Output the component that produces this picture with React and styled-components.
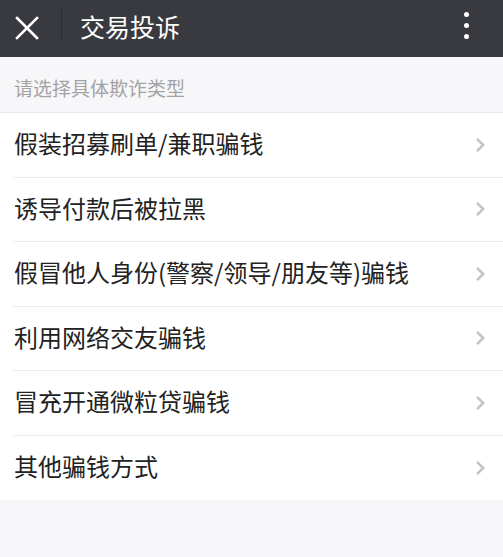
import React from "react";
import styled, { createGlobalStyle } from "styled-components";

const items = [
  "假装招募刷单/兼职骗钱",
  "诱导付款后被拉黑",
  "假冒他人身份(警察/领导/朋友等)骗钱",
  "利用网络交友骗钱",
  "冒充开通微粒贷骗钱",
  "其他骗钱方式",
];

const GlobalStyle = createGlobalStyle`
  html, body {
    margin: 0;
    padding: 0;
    background: #f7f6f9;
    font-family: "Noto Sans CJK SC", "Noto Sans", sans-serif;
  }
`;

function App() {
  return (
    <Page>
      <GlobalStyle />
      <Header>
        <CloseButton>
          <svg width="24" height="24" viewBox="0 0 24 24">
            <path
              d="M2 2 L22 22 M22 2 L2 22"
              stroke="#fff"
              strokeWidth="2.6"
              strokeLinecap="square"
            />
          </svg>
        </CloseButton>
        <Divider />
        <Title>交易投诉</Title>
        <MoreButton>
          <Dot />
          <Dot />
          <Dot />
        </MoreButton>
      </Header>
      <Hint>请选择具体欺诈类型</Hint>
      <List>
        {items.map((text) => (
          <Row key={text}>
            <RowText>{text}</RowText>
            <svg width="11" height="16" viewBox="0 0 11 16">
              <path
                d="M2 1.8 L8.2 8 L2 14.2"
                fill="none"
                stroke="#c4c4c8"
                strokeWidth="2.6"
              />
            </svg>
          </Row>
        ))}
      </List>
    </Page>
  );
}

const Page = styled.div`
  width: 503px;
  min-height: 557px;
  background: #f7f6f9;
`;

const Header = styled.div`
  height: 57px;
  background: #393a3f;
  display: flex;
  align-items: center;
  padding: 0 15px;
  box-sizing: border-box;
`;

const CloseButton = styled.div`
  width: 24px;
  height: 24px;
  display: flex;
  margin-top: -2px;
`;

const Divider = styled.div`
  width: 1px;
  height: 34px;
  background: #2c2d31;
  margin: -8px 18px 0 22px;
`;

const Title = styled.div`
  flex: 1;
  color: #fff;
  font-size: 25px;
  margin-top: -6px;
`;

const MoreButton = styled.div`
  display: flex;
  flex-direction: column;
  gap: 6px;
  margin-right: 19px;
  margin-top: -6px;
`;

const Dot = styled.span`
  width: 5px;
  height: 5px;
  border-radius: 50%;
  background: #fff;
`;

const Hint = styled.div`
  height: 55px;
  display: flex;
  align-items: center;
  padding: 6px 14px 0;
  color: #a3a3a3;
  font-size: 19px;
  box-sizing: border-box;
`;

const List = styled.div`
  background: #fff;
  border-top: 1px solid #ebebeb;
`;

const Row = styled.div`
  height: 64.5px;
  box-sizing: border-box;
  display: flex;
  align-items: center;
  justify-content: space-between;
  margin-left: 13px;
  padding: 0 17px 0 1px;
  border-bottom: 1px solid #ebebeb;

  &:last-child {
    border-bottom: none;
  }
`;

const RowText = styled.span`
  font-size: 24px;
  color: #222;
  margin-top: -4px;
`;

export default App;
